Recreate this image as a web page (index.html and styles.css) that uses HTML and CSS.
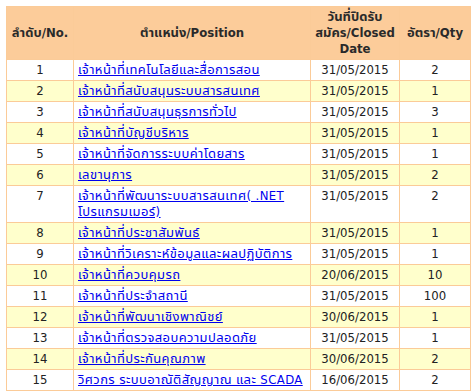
FILE: index.html
```html
<!DOCTYPE html>
<html lang="th">
<head>
<meta charset="utf-8">
<title>Positions</title>
<link rel="stylesheet" href="styles.css">
</head>
<body>
<table class="jobs">
  <colgroup>
    <col class="c-no">
    <col class="c-pos">
    <col class="c-date">
    <col class="c-qty">
  </colgroup>
  <thead>
    <tr>
      <th>ลำดับ/No.</th>
      <th>ตำแหน่ง/Position</th>
      <th>วันที่ปิดรับ<br>สมัคร/Closed<br>Date</th>
      <th>อัตรา/Qty</th>
    </tr>
  </thead>
  <tbody>
    <tr><td>1</td><td class="pos"><a href="#">เจ้าหน้าที่เทคโนโลยีและสื่อการสอน</a></td><td>31/05/2015</td><td>2</td></tr>
    <tr><td>2</td><td class="pos"><a href="#">เจ้าหน้าที่สนับสนุนระบบสารสนเทศ</a></td><td>31/05/2015</td><td>1</td></tr>
    <tr><td>3</td><td class="pos"><a href="#">เจ้าหน้าที่สนับสนุนธุรการทั่วไป</a></td><td>31/05/2015</td><td>3</td></tr>
    <tr><td>4</td><td class="pos"><a href="#">เจ้าหน้าที่บัญชีบริหาร</a></td><td>31/05/2015</td><td>1</td></tr>
    <tr><td>5</td><td class="pos"><a href="#">เจ้าหน้าที่จัดการระบบค่าโดยสาร</a></td><td>31/05/2015</td><td>1</td></tr>
    <tr><td>6</td><td class="pos"><a href="#">เลขานุการ</a></td><td>31/05/2015</td><td>2</td></tr>
    <tr><td class="top">7</td><td class="pos"><a href="#">เจ้าหน้าที่พัฒนาระบบสารสนเทศ( .NET โปรแกรมเมอร์)</a></td><td class="top">31/05/2015</td><td class="top">2</td></tr>
    <tr><td>8</td><td class="pos"><a href="#">เจ้าหน้าที่ประชาสัมพันธ์</a></td><td>31/05/2015</td><td>1</td></tr>
    <tr><td>9</td><td class="pos"><a href="#">เจ้าหน้าที่วิเคราะห์ข้อมูลและผลปฏิบัติการ</a></td><td>31/05/2015</td><td>1</td></tr>
    <tr><td>10</td><td class="pos"><a href="#">เจ้าหน้าที่ควบคุมรถ</a></td><td>20/06/2015</td><td>10</td></tr>
    <tr><td>11</td><td class="pos"><a href="#">เจ้าหน้าที่ประจำสถานี</a></td><td>31/05/2015</td><td>100</td></tr>
    <tr><td>12</td><td class="pos"><a href="#">เจ้าหน้าที่พัฒนาเชิงพาณิชย์</a></td><td>30/06/2015</td><td>1</td></tr>
    <tr><td>13</td><td class="pos"><a href="#">เจ้าหน้าที่ตรวจสอบความปลอดภัย</a></td><td>31/05/2015</td><td>1</td></tr>
    <tr><td>14</td><td class="pos"><a href="#">เจ้าหน้าที่ประกันคุณภาพ</a></td><td>30/06/2015</td><td>2</td></tr>
    <tr><td>15</td><td class="pos"><a href="#">วิศวกร ระบบอาณัติสัญญาณ และ SCADA</a></td><td>16/06/2015</td><td>2</td></tr>
  </tbody>
</table>
</body>
</html>
```

FILE: styles.css
```css
html, body {
  margin: 0;
  background: #ffffff;
}
body {
  padding: 6px;
  font-family: "DejaVu Sans Condensed", "Noto Sans Thai", "Noto Sans Thai UI", "Loma", "Garuda", "Tlwg Typo", "Noto Sans", sans-serif;
  font-size: 13px;
  color: #222222;
}
.jobs {
  border-collapse: collapse;
  table-layout: fixed;
  width: 464px;
}
.c-no { width: 67px; }
.c-pos { width: 237px; }
.c-date { width: 89px; }
.c-qty { width: 71px; }
.jobs th,
.jobs td {
  border: 1px solid #fbcb98;
  padding: 2px 3px;
  line-height: 16px;
  text-align: center;
  vertical-align: middle;
}
.jobs th {
  background: #fccc9a;
  font-weight: bold;
  color: #2a2a2a;
  height: 48px;
}
.jobs tbody tr:nth-child(odd) { background: #ffffff; }
.jobs tbody tr:nth-child(even) { background: #ffffcc; }
.jobs td.pos { text-align: left; padding-left: 4px; }
.jobs td.top { vertical-align: top; }
.jobs a {
  color: #0000ee;
  text-decoration: underline;
  letter-spacing: 0.4px;
}
```
